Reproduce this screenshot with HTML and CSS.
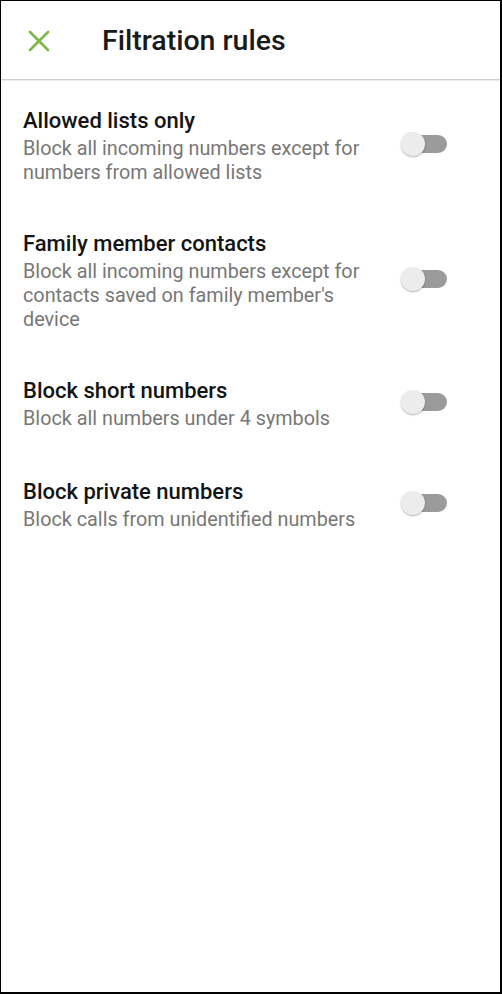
FILE: index.html
```html
<!DOCTYPE html>
<html lang="en">
<head>
  <meta charset="UTF-8">
  <title>Filtration rules</title>
  <link rel="stylesheet" href="styles.css">
</head>
<body>

  <div id="screen">

    <!-- toolbar -->
    <div class="toolbar">
      <div class="close-btn">
        <svg width="22" height="22" viewBox="0 0 22 22">
          <path d="M2 2 L20 20 M20 2 L2 20" stroke="#7cb84a" stroke-width="2.6" stroke-linecap="round" fill="none"/>
        </svg>
      </div>
      <div class="toolbar-title">Filtration rules</div>
    </div>

    <!-- rules -->
    <div class="rules">
      <div class="rule">
        <div class="rule-text">
          <div class="rule-title">Allowed lists only</div>
          <div class="rule-desc">Block all incoming numbers except for numbers from allowed lists</div>
        </div>
        <div class="switch"><div class="knob"></div></div>
      </div>

      <div class="rule">
        <div class="rule-text">
          <div class="rule-title">Family member contacts</div>
          <div class="rule-desc">Block all incoming numbers except for contacts saved on family member's device</div>
        </div>
        <div class="switch"><div class="knob"></div></div>
      </div>

      <div class="rule">
        <div class="rule-text">
          <div class="rule-title">Block short numbers</div>
          <div class="rule-desc">Block all numbers under 4 symbols</div>
        </div>
        <div class="switch"><div class="knob"></div></div>
      </div>

      <div class="rule last">
        <div class="rule-text">
          <div class="rule-title">Block private numbers</div>
          <div class="rule-desc">Block calls from unidentified numbers</div>
        </div>
        <div class="switch"><div class="knob"></div></div>
      </div>
    </div>

  </div>

</body>
</html>
```

FILE: styles.css
```css
html, body {
  margin: 0;
  padding: 0;
  height: 100%;
  background: white;
  font-family: Roboto, 'Noto Sans', sans-serif;
}

#screen {
  box-sizing: border-box;
  width: 502px;
  height: 994px;
  border-top: 1px solid #000;
  border-left: 1px solid #000;
  border-right: 2px solid #000;
  border-bottom: 2px solid #000;
  background: #fff;
}

.toolbar {
  display: flex;
  align-items: center;
  height: 78px;
  border-bottom: 1px solid #cfcfcf;
  box-shadow: 0 1px 1px rgba(0,0,0,0.08);
}

.close-btn {
  width: 22px;
  height: 22px;
  margin-left: 27px;
  margin-right: 52px;
  margin-top: 2px;
}

.close-btn svg {
  display: block;
}

.toolbar-title {
  font-size: 28.5px;
  font-weight: 500;
  color: #1a1a1a;
}

.rules {
  padding-top: 27px;
}

.rule {
  display: flex;
  align-items: center;
  padding: 0 53px 45px 22px;
}

.rule.last {
  margin-top: 2px;
}

.rule-text {
  width: 355px;
}

.rule-title {
  font-size: 22px;
  line-height: 28px;
  font-weight: 500;
  color: #141414;
}

.rule-desc {
  margin-top: 2px;
  font-size: 19.8px;
  line-height: 24px;
  color: #777;
}

.switch {
  position: relative;
  margin-left: auto;
  margin-top: -4px;
  width: 34px;
  height: 18px;
  border-radius: 9px;
  background: #9b9b9b;
}

.knob {
  position: absolute;
  left: -12px;
  top: -3px;
  width: 24px;
  height: 24px;
  border-radius: 50%;
  background: #ececec;
  box-shadow: 0 1px 2px rgba(0,0,0,0.3);
}
```
